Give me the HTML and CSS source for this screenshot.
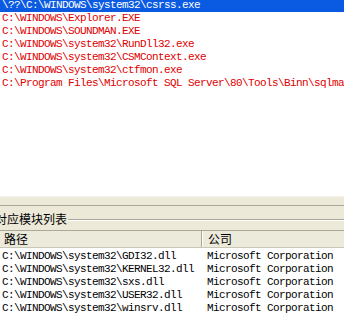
FILE: index.html
```html
<!DOCTYPE html>
<html lang="zh-CN">
<head>
  <meta charset="UTF-8" />
  <title>进程模块</title>
  <link rel="stylesheet" href="styles.css">
</head>
<body>
  <div class="window">
    <div class="proc-list">
      <div class="proc-rows">
        <div class="row selected">\??\C:\WINDOWS\system32\csrss.exe</div>
        <div class="row">C:\WINDOWS\Explorer.EXE</div>
        <div class="row">C:\WINDOWS\SOUNDMAN.EXE</div>
        <div class="row">C:\WINDOWS\system32\RunDll32.exe</div>
        <div class="row">C:\WINDOWS\system32\CSMContext.exe</div>
        <div class="row">C:\WINDOWS\system32\ctfmon.exe</div>
        <div class="row">C:\Program Files\Microsoft SQL Server\80\Tools\Binn\sqlmangr.exe</div>
      </div>
    </div>
    <div class="splitter"></div>
    <div class="group">
      <div class="group-title">
        <span class="label">对应模块列表</span>
        <span class="etch"></span>
      </div>
      <div class="mod-list">
        <div class="mod-head">
          <div class="col-path">路径</div>
          <div class="col-company">公司</div>
        </div>
        <div class="mod-rows">
          <div class="mod-row"><div class="col-path">C:\WINDOWS\system32\GDI32.dll</div><div class="col-company">Microsoft Corporation</div></div>
          <div class="mod-row"><div class="col-path">C:\WINDOWS\system32\KERNEL32.dll</div><div class="col-company">Microsoft Corporation</div></div>
          <div class="mod-row"><div class="col-path">C:\WINDOWS\system32\sxs.dll</div><div class="col-company">Microsoft Corporation</div></div>
          <div class="mod-row"><div class="col-path">C:\WINDOWS\system32\USER32.dll</div><div class="col-company">Microsoft Corporation</div></div>
          <div class="mod-row"><div class="col-path">C:\WINDOWS\system32\winsrv.dll</div><div class="col-company">Microsoft Corporation</div></div>
        </div>
      </div>
    </div>
  </div>
</body>
</html>
```

FILE: styles.css
```css
body {
  margin: 0;
  padding: 0;
  background-color: #fff;
  font-family: 'Liberation Mono', monospace;
}

.window {
  width: 344px;
  height: 321px;
  display: flex;
  flex-direction: column;
  overflow: hidden;
  background-color: #ece9d8;
}

.proc-list {
  height: 196px;
  background-color: #fff;
  border-bottom: 1px solid #f4f3ec;
  overflow: hidden;
  flex-shrink: 0;
}

.proc-rows {
  margin-top: -1px;
}

.row {
  height: 13px;
  line-height: 13px;
  padding-left: 2px;
  font-size: 11px;
  letter-spacing: -0.6px;
  color: #e00000;
  white-space: nowrap;
  overflow: hidden;
}

.row.selected {
  background-color: #0a5ae2;
  color: #fff;
}

.splitter {
  height: 8px;
  border-bottom: 1px solid #aca899;
  flex-shrink: 0;
}

.group {
  flex: 1;
  display: flex;
  flex-direction: column;
}

.group-title {
  display: flex;
  align-items: center;
  height: 14px;
  margin-top: 6px;
  margin-bottom: 4px;
}

.label {
  margin-left: -5px;
  padding-right: 1px;
  font-family: 'Noto Sans CJK SC', sans-serif;
  font-size: 12px;
  line-height: 14px;
  color: #000;
  white-space: nowrap;
}

.etch {
  flex: 1;
  height: 0;
  margin-top: 1px;
  border-top: 1px solid #aca899;
  border-bottom: 1px solid #fff;
}

.mod-list {
  flex: 1;
  display: flex;
  flex-direction: column;
  background-color: #fff;
}

.mod-head {
  display: flex;
  height: 16px;
  border-top: 1px solid #aca899;
  border-bottom: 1px solid #cbc7b8;
  background-color: #ebeadb;
  font-family: 'Noto Sans CJK SC', sans-serif;
  font-size: 12px;
  line-height: 16px;
}

.mod-head .col-path {
  width: 197px;
  padding-left: 4px;
  border-right: 1px solid #aca899;
}

.mod-head .col-company {
  padding-left: 5px;
  border-left: 1px solid #fff;
}

.mod-rows {
  padding-top: 2px;
}

.mod-row {
  display: flex;
  height: 13px;
  line-height: 13px;
  font-size: 11px;
  letter-spacing: -0.6px;
  color: #000;
  white-space: nowrap;
}

.mod-row .col-path {
  width: 203px;
  padding-left: 2px;
  overflow: hidden;
}

.mod-row .col-company {
  padding-left: 2px;
}
```
